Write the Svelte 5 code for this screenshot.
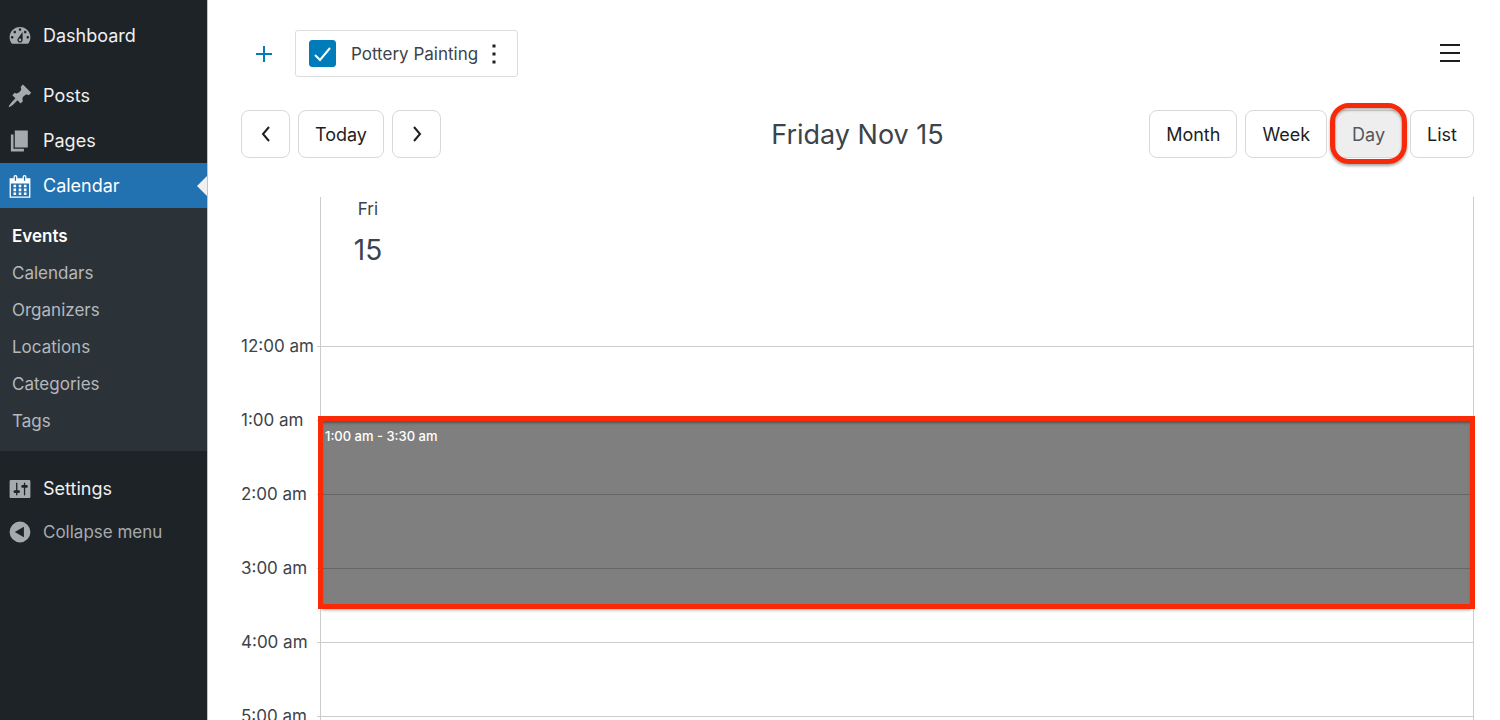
<script lang="ts">
  type View = "Month" | "Week" | "Day" | "List";

  const HOUR_HEIGHT = 74;

  const topMenu = [
    { label: "Posts", icon: "post" },
    { label: "Pages", icon: "page" },
    { label: "Calendar", icon: "calendar" },
  ];
  const submenu = ["Events", "Calendars", "Organizers", "Locations", "Categories", "Tags"];
  const views: View[] = ["Month", "Week", "Day", "List"];
  const hours = ["12:00 am", "1:00 am", "2:00 am", "3:00 am", "4:00 am", "5:00 am"];
  const events = [{ start: 1, end: 3.5, label: "1:00 am - 3:30 am" }];

  const icons: Record<string, string> = {
    dashboard:
      "M3.76 16h12.48c1.1-1.37 1.76-3.11 1.76-5 0-4.42-3.58-8-8-8s-8 3.58-8 8c0 1.89.66 3.63 1.76 5zM10 4c.55 0 1 .45 1 1s-.45 1-1 1-1-.45-1-1 .45-1 1-1zM6 6c.55 0 1 .45 1 1s-.45 1-1 1-1-.45-1-1 .45-1 1-1zm8 0c.55 0 1 .45 1 1s-.45 1-1 1-1-.45-1-1 .45-1 1-1zm-5.37 5.55L12 7v6c0 1.1-.9 2-2 2s-2-.9-2-2c0-.57.24-1.08.63-1.45zM4 10c.55 0 1 .45 1 1s-.45 1-1 1-1-.45-1-1 .45-1 1-1zm12 0c.55 0 1 .45 1 1s-.45 1-1 1-1-.45-1-1 .45-1 1-1zm-5 3c0-.55-.45-1-1-1s-1 .45-1 1 .45 1 1 1 1-.45 1-1z",
    post:
      "M10.44 3.02l1.82-1.82 6.36 6.35-1.83 1.82c-1.05-.68-2.48-.57-3.41.36l-.75.75c-.92.93-1.04 2.35-.35 3.41l-1.83 1.82-2.41-2.41-2.8 2.79c-.42.42-3.38 2.71-3.8 2.29s1.86-3.39 2.28-3.81l2.79-2.79L4.1 9.36l1.83-1.82c1.05.69 2.48.57 3.4-.36l.75-.75c.93-.92 1.05-2.35.36-3.41z",
    page: "M6 15V2h10v13H6zm-1 1h8v2H3V5h2v11z",
    calendar:
      "M15 4h3v15H2V4h3V3a1.5 1.5 0 0 1 3 0v1h4V3a1.5 1.5 0 0 1 3 0zM6 3v2.5a.5.5 0 0 0 1 0V3a.5.5 0 0 0-1 0zM13 3v2.5a.5.5 0 0 0 1 0V3a.5.5 0 0 0-1 0zM17 18V8H3v10zM5 9h2v2H5zM9 9h2v2H9zM13 9h2v2h-2zM5 12h2v2H5zM9 12h2v2H9zM13 12h2v2h-2zM5 15h2v2H5zM9 15h2v2H9zM13 15h2v2h-2z",
    settings:
      "M18 16V4c0-.55-.45-1-1-1H3c-.55 0-1 .45-1 1v12c0 .55.45 1 1 1h14c.55 0 1-.45 1-1zM8 11h1c.55 0 1 .45 1 1s-.45 1-1 1H8v1.5c0 .28-.22.5-.5.5s-.5-.22-.5-.5V13H6c-.55 0-1-.45-1-1s.45-1 1-1h1V5.5c0-.28.22-.5.5-.5s.5.22.5.5V11zm5-2h-1c-.55 0-1-.45-1-1s.45-1 1-1h1V5.5c0-.28.22-.5.5-.5s.5.22.5.5V7h1c.55 0 1 .45 1 1s-.45 1-1 1h-1v5.5c0 .28-.22.5-.5.5s-.5-.22-.5-.5V9z",
    collapse: "M10 2a8 8 0 1 0 0 16 8 8 0 0 0 0-16zM13 6v8l-7-4z",
  };

  let calendarShown = $state(true);
  let view = $state<View>("Day");
</script>

{#snippet menuIcon(name: string)}
  <svg class="menu-icon" viewBox="0 0 20 20" fill="currentColor" fill-rule="evenodd" aria-hidden="true">
    <path d={icons[name]} />
  </svg>
{/snippet}

<div class="app">
  <nav class="sidebar" aria-label="Main menu">
    <a class="menu-item" href="#dashboard">{@render menuIcon("dashboard")}Dashboard</a>

    <div class="separator"></div>

    {#each topMenu as item (item.label)}
      <a class="menu-item" class:current={item.label === "Calendar"} href="#{item.icon}">
        {@render menuIcon(item.icon)}{item.label}
      </a>
    {/each}

    <div class="submenu">
      {#each submenu as label, i (label)}
        <a class="submenu-item" class:current={i === 0} href="#{label}">{label}</a>
      {/each}
    </div>

    <div class="separator"></div>

    <a class="menu-item" href="#settings">{@render menuIcon("settings")}Settings</a>
    <button class="menu-item collapse">{@render menuIcon("collapse")}Collapse menu</button>
  </nav>

  <main class="main">
    <!-- Calendar list -->
    <div class="calendars">
      <button class="icon-btn add" aria-label="Add calendar">
        <svg width="16" height="16" viewBox="0 0 16 16" stroke="currentColor" stroke-width="2">
          <path d="M8 0v16M0 8h16" />
        </svg>
      </button>
      <div class="chip">
        <label class="chip-label">
          <span class="check">
            <input type="checkbox" bind:checked={calendarShown} />
            {#if calendarShown}
              <svg viewBox="0 0 27 27" fill="none" stroke="#fff" stroke-width="2" aria-hidden="true">
                <path d="M6 15l5 5L21 8" />
              </svg>
            {/if}
          </span>
          Pottery Painting
        </label>
        <button class="icon-btn kebab" aria-label="Calendar options">
          <svg width="4" height="20" viewBox="0 0 4 20" fill="currentColor">
            <path d="M.5.5h3v3h-3zM.5 8.5h3v3h-3zM.5 16.5h3v3h-3z" />
          </svg>
        </button>
      </div>
      <button class="icon-btn more" aria-label="Menu">
        <svg width="20" height="20" viewBox="0 0 20 20" stroke="currentColor" stroke-width="2">
          <path d="M0 1h20M0 9h20M0 17h20" />
        </svg>
      </button>
    </div>

    <!-- Toolbar -->
    <div class="toolbar">
      <div class="btn-group">
        <button class="btn arrow" aria-label="Previous day">
          <svg width="10" height="16" viewBox="0 0 10 16" fill="none" stroke="currentColor" stroke-width="2">
            <path d="M8 1L2 8l6 7" />
          </svg>
        </button>
        <button class="btn today">Today</button>
        <button class="btn arrow" aria-label="Next day">
          <svg width="10" height="16" viewBox="0 0 10 16" fill="none" stroke="currentColor" stroke-width="2">
            <path d="M2 1l6 7-6 7" />
          </svg>
        </button>
      </div>
      <h1 class="title">Friday Nov 15</h1>
      <div class="btn-group views">
        {#each views as name (name)}
          <button class="btn" class:active={view === name} onclick={() => (view = name)}>{name}</button>
        {/each}
      </div>
    </div>

    <!-- Day grid -->
    <div class="day">
      <div class="day-header">
        <div class="day-name">
          <span>Fri</span>
          <span class="day-number">15</span>
        </div>
      </div>
      <div class="hours">
        {#each hours as hour (hour)}
          <div class="hour">
            <span class="hour-label">{hour}</span>
            <div class="slot"></div>
          </div>
        {/each}
        {#each events as event (event.label)}
          <div
            class="event"
            style="top: {event.start * HOUR_HEIGHT}px; height: {(event.end - event.start) * HOUR_HEIGHT}px"
          >
            {event.label}
          </div>
        {/each}
      </div>
    </div>
  </main>
</div>

<style>
  :global(body) {
    background: #fff;
  }

  .app {
    display: flex;
    height: 100vh;
    overflow: hidden;
    font-family: Inter, "Liberation Sans", sans-serif;
    font-size: 17px;
    color: #3c434a;
  }

  button {
    font: inherit;
    cursor: pointer;
  }

  /* sidebar */
  .sidebar {
    flex: 0 0 208px;
    padding-top: 13px;
    background: #1d2327;
    border-right: 1px solid #c3c4c7;
    box-sizing: border-box;
  }

  .menu-item {
    position: relative;
    display: flex;
    align-items: center;
    gap: 10px;
    width: 100%;
    height: 45px;
    padding: 0 7px;
    box-sizing: border-box;
    color: #f0f0f1;
    font-size: 18px;
    text-decoration: none;
  }

  .menu-icon {
    width: 26px;
    height: 26px;
    color: #a7aaad;
  }

  .menu-item.current {
    background: #2271b1;
    color: #fff;
  }
  .menu-item.current .menu-icon { color: #fff; }
  .menu-item.current::after {
    content: "";
    position: absolute;
    right: 0;
    border: 10px solid transparent;
    border-right-color: #f0f0f1;
    border-left: none;
  }

  .menu-item.collapse {
    height: 41px;
    border: none;
    background: none;
    color: #a7aaad;
    font-size: 17px;
  }

  .separator { height: 15px; }

  .submenu {
    padding: 10px 0 11px;
    background: #2c3338;
  }

  .submenu-item {
    display: block;
    padding: 0 12px;
    line-height: 37px;
    color: #b5b8bc;
    text-decoration: none;
  }
  .submenu-item.current { color: #fff; font-weight: 600; }

  /* main area */
  .main {
    flex: 1;
    min-width: 0;
    padding: 30px 26px 0 33px;
  }

  .icon-btn {
    display: flex;
    padding: 0;
    border: none;
    background: none;
    color: #1e1e1e;
  }
  .icon-btn.add { padding: 0 15px; color: #007cba; }
  .icon-btn.kebab { padding: 0 8px; }
  .icon-btn.more { margin-left: auto; padding: 0 14px; }

  .calendars {
    display: flex;
    align-items: center;
    gap: 8px;
    height: 47px;
  }

  .chip {
    display: flex;
    align-items: center;
    gap: 6px;
    height: 47px;
    padding: 0 13px;
    border: 1px solid #ddd;
    border-radius: 3px;
    box-sizing: border-box;
  }

  .chip-label {
    display: flex;
    align-items: center;
    gap: 15px;
  }

  .check { display: grid; }
  .check > * { grid-area: 1 / 1; }
  .check svg { width: 27px; height: 27px; pointer-events: none; }
  .check input {
    appearance: none;
    width: 27px;
    height: 27px;
    margin: 0;
    border: 1px solid #007cba;
    border-radius: 3px;
  }
  .check input:checked { background: #007cba; }

  .toolbar {
    display: grid;
    grid-template-columns: 1fr auto 1fr;
    align-items: center;
    padding-top: 33px;
  }

  .btn-group { display: flex; gap: 8px; }
  .views { justify-content: flex-end; }

  .btn {
    position: relative;
    height: 48px;
    padding: 0 16px;
    border: 1px solid #d8d8d8;
    border-radius: 8px;
    background: #fff;
    color: #1e1e1e;
    font-size: 18px;
  }
  .btn.arrow {
    display: flex;
    align-items: center;
    justify-content: center;
    width: 49px;
    padding: 0;
  }
  .btn.today { padding: 0 16px; }
  .btn.active { background: #eee; color: #50575e; }
  .btn.active::after {
    content: "";
    position: absolute;
    inset: -8px -6px -7px;
    border: 5px solid #f42a0a;
    border-radius: 19px;
    box-shadow: 0 2px 3px rgba(0, 0, 0, 0.35), inset 0 2px 3px rgba(0, 0, 0, 0.3);
  }

  .title {
    margin: 0;
    font-size: 27px;
    font-weight: 400;
  }

  /* day grid */
  .day { padding-top: 39px; }

  .day-header {
    height: 149px;
    margin-left: 79px;
    border: solid #ccc;
    border-width: 0 1px;
  }

  .day-name {
    display: flex;
    flex-direction: column;
    align-items: center;
    gap: 12px;
    width: 94px;
    line-height: 24px;
  }
  .day-number { font-size: 28px; line-height: 34px; }

  .hours { position: relative; }

  .hour {
    display: grid;
    grid-template-columns: 76px 3px 1fr;
    height: 74px;
  }
  .hour::before {
    content: "";
    grid-area: 1 / 2;
    border-top: 1px solid #ccc;
  }

  .hour-label {
    grid-area: 1 / 1;
    line-height: 24px;
    margin-top: -12px;
    white-space: nowrap;
  }

  .slot {
    grid-area: 1 / 3;
    border: 1px solid #ccc;
    border-bottom: none;
  }

  .event {
    position: absolute;
    left: 81px;
    right: 3px;
    padding: 6px 3px;
    box-sizing: border-box;
    outline: 5px solid #f92a05;
    outline-offset: -1px;
    background: rgba(0, 0, 0, 0.5);
    box-shadow: 0 5px 3px rgba(0, 0, 0, 0.35), inset 0 3px 3px rgba(0, 0, 0, 0.35);
    color: #fff;
    font-size: 13px;
    font-weight: 500;
    line-height: 20px;
  }
</style>
